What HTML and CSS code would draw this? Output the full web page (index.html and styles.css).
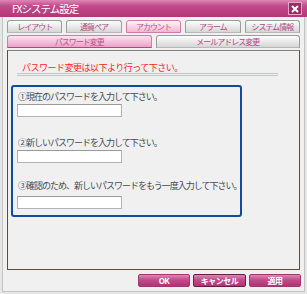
FILE: index.html
```html
<!DOCTYPE html>
<html lang="ja">
<head>
    <meta charset="UTF-8">
    <title>FXシステム設定</title>
    <link rel="stylesheet" href="styles.css">
</head>
<body>
    <div class="window">
        <div class="titlebar">
            <span class="title">FXシステム設定</span>
            <span class="close">
                <svg width="8" height="8" viewBox="0 0 8 8"><path d="M1 1L7 7M7 1L1 7" stroke="#fff" stroke-width="2"/></svg>
            </span>
        </div>
        <div class="frame">
            <div class="tabs tabs-main">
                <div class="tab">レイアウト</div>
                <div class="tab">通貨ペア</div>
                <div class="tab active">アカウント</div>
                <div class="tab">アラーム</div>
                <div class="tab">システム情報</div>
            </div>
            <div class="tabs tabs-sub">
                <div class="tab active">パスワード変更</div>
                <div class="tab">メールアドレス変更</div>
            </div>
            <div class="panel">
                <p class="notice">パスワード変更は以下より行って下さい。</p>
                <div class="form-box">
                    <div class="field field-1">
                        <label>①現在のパスワードを入力して下さい。</label>
                        <input type="password">
                    </div>
                    <div class="field field-2">
                        <label>②新しいパスワードを入力して下さい。</label>
                        <input type="password">
                    </div>
                    <div class="field field-3">
                        <label>③確認のため、新しいパスワードをもう一度入力して下さい。</label>
                        <input type="password">
                    </div>
                </div>
            </div>
            <div class="buttons">
                <button class="btn">OK</button>
                <button class="btn btn-focus">キャンセル</button>
                <button class="btn">適用</button>
            </div>
        </div>
    </div>
</body>
</html>
```

FILE: styles.css
```css
body {
    margin: 0;
    padding: 0;
    background: #ffffff;
    font-family: "Noto Sans CJK JP", "Noto Sans", sans-serif;
}
.window {
    width: 307px;
    height: 294px;
    background: #e6e6e6;
    box-sizing: border-box;
}
.titlebar {
    height: 17px;
    display: flex;
    align-items: center;
    justify-content: space-between;
    padding: 0 5px 0 12px;
    background: linear-gradient(#dc86b3, #c44a8b 35%, #b23679);
}
.title {
    color: #fff;
    font-size: 10.5px;
    letter-spacing: -1px;
    line-height: 12px;
}
.close {
    width: 14px;
    height: 13px;
    box-sizing: border-box;
    border: 1px solid #e6a8c8;
    background: #9e2b65;
    display: flex;
    align-items: center;
    justify-content: center;
}
.frame {
    margin: 0 2px;
    height: 275px;
    box-sizing: border-box;
    border: 1px solid #c4c4c4;
    border-top: none;
    background: #f0f0f0;
    padding: 3px 4px 4px 4px;
}
.tabs {
    display: grid;
    gap: 4px;
    margin-bottom: 2px;
}
.tabs-main {
    grid-template-columns: repeat(5, 1fr);
}
.tabs-sub {
    grid-template-columns: 1fr 1fr;
}
.tab {
    height: 13px;
    box-sizing: border-box;
    border: 1px solid #9c9c9c;
    border-bottom-color: #b8b8b8;
    border-radius: 3px 3px 0 0;
    background: linear-gradient(#fdfdfd, #d6d6d6);
    color: #b04a85;
    font-size: 8px;
    letter-spacing: -1px;
    line-height: 11px;
    text-align: center;
}
.tab.active {
    border-color: #d47aa8;
    background: linear-gradient(#fff6fa, #f0b6d3);
    color: #c0508a;
}
.tabs-sub .tab.active {
    border-bottom-color: #b8457f;
    background: linear-gradient(#fbe4ef, #e9a2c6);
}
.panel {
    height: 220px;
    box-sizing: border-box;
    border: 1px solid #5c4d40;
    border-top-color: #8c7e72;
    background: #f0f0f0;
}
.notice {
    margin: 11px 0 0 9px;
    width: 261px;
    padding-left: 5px;
    box-sizing: border-box;
    color: #ff1e1e;
    font-size: 9px;
    letter-spacing: -0.5px;
    line-height: 11px;
    border-bottom: 3px double #c4c8c4;
}
.form-box {
    margin: 9px 0 0 3px;
    width: 231px;
    box-sizing: border-box;
    border: 2px solid #0f4c9e;
    border-radius: 3px;
    padding: 4px 4px 6px 4px;
}
.field label {
    display: block;
    padding-left: 1px;
    color: #414b57;
    font-size: 9px;
    letter-spacing: -1px;
    line-height: 12px;
    white-space: nowrap;
}
.field input {
    display: block;
    width: 105px;
    height: 13px;
    box-sizing: border-box;
    margin: 1px 0 0 0;
    padding: 0;
    border: 1px solid #b4b4b4;
    border-top-color: #9a9a9a;
    background: #fff;
}
.field-2 {
    margin-top: 20px;
}
.field-3 {
    margin-top: 17px;
}
.field-3 input {
    margin-top: 4px;
}
.buttons {
    display: flex;
    justify-content: flex-end;
    gap: 3px;
    margin: 4px -1px 0 0;
}
.btn {
    width: 52px;
    height: 13px;
    box-sizing: border-box;
    padding: 0;
    border: 1px solid #a8346f;
    border-radius: 2px;
    background: linear-gradient(#dd86b4, #c24a8a 45%, #ac3574);
    color: #fff;
    font-family: "Noto Sans CJK JP", "Noto Sans", sans-serif;
    font-size: 8px;
    font-weight: bold;
    letter-spacing: -0.5px;
    line-height: 11px;
    cursor: pointer;
}
.btn-focus {
    width: 53px;
    border-color: #6e1a44;
}
```
